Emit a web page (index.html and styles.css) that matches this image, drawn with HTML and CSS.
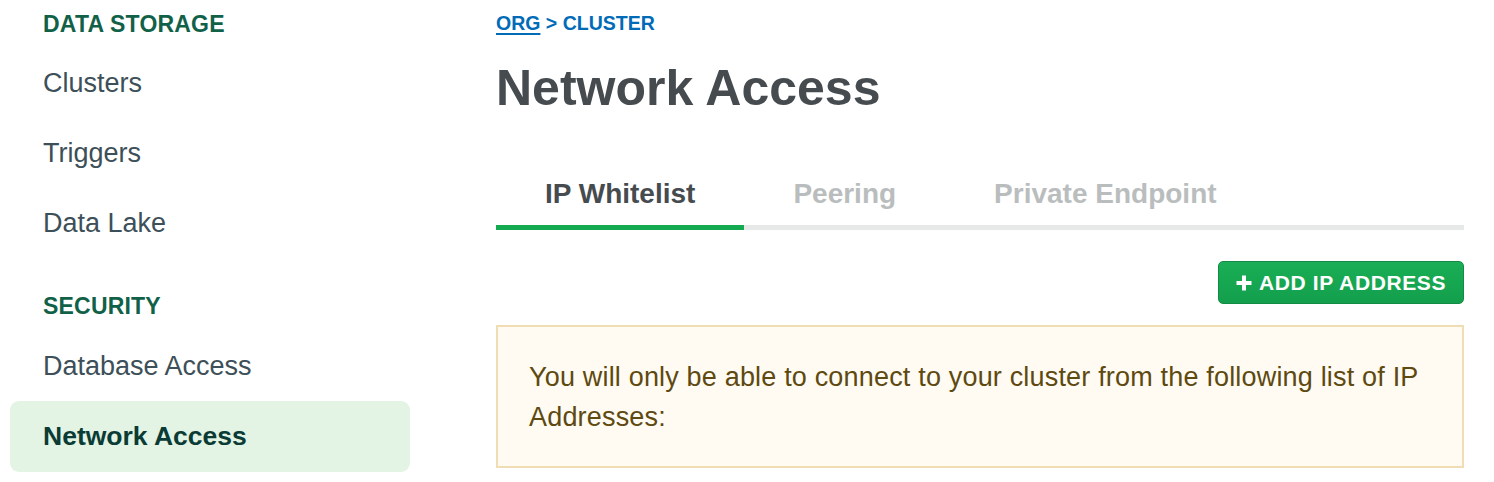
FILE: index.html
```html
<!DOCTYPE html>
<html lang="en">
<head>
<meta charset="utf-8">
<title>Network Access</title>
<link rel="stylesheet" href="styles.css">
</head>
<body>
<div class="page">
  <nav class="sidebar">
    <div class="nav-heading">DATA STORAGE</div>
    <a class="nav-item">Clusters</a>
    <a class="nav-item">Triggers</a>
    <a class="nav-item">Data Lake</a>
    <div class="nav-heading nav-heading-gap">SECURITY</div>
    <a class="nav-item">Database Access</a>
    <a class="nav-item nav-item-active">Network Access</a>
  </nav>
  <main class="main">
    <div class="breadcrumb"><a class="crumb-link">ORG</a> &gt; CLUSTER</div>
    <h1 class="title">Network Access</h1>
    <div class="tabs">
      <div class="tab tab-active">IP Whitelist</div>
      <div class="tab">Peering</div>
      <div class="tab">Private Endpoint</div>
    </div>
    <div class="actions">
      <button class="btn-add">
        <svg class="plus" width="16" height="16" viewBox="0 0 16 16"><path d="M8 0.5V15.5M0.5 8H15.5" stroke="#fff" stroke-width="4" stroke-linecap="butt"/></svg>
        <span>ADD IP ADDRESS</span>
      </button>
    </div>
    <div class="alert">You will only be able to connect to your cluster from the following list of IP Addresses:</div>
  </main>
</div>
</body>
</html>
```
FILE: styles.css
```css
html, body {
  margin: 0;
  padding: 0;
  background: #ffffff;
}
body {
  font-family: "Liberation Sans", Arial, sans-serif;
}
.page {
  display: flex;
  align-items: flex-start;
}
.sidebar {
  width: 400px;
  margin-left: 10px;
  padding-top: 9px;
  display: flex;
  flex-direction: column;
}
.nav-heading {
  font-size: 23px;
  font-weight: 700;
  line-height: 30px;
  color: #116149;
  padding-left: 33px;
  margin-bottom: 9px;
  letter-spacing: 0.2px;
}
.nav-heading-gap {
  margin-top: 33px;
  margin-bottom: 10px;
}
.nav-item {
  display: block;
  height: 70px;
  line-height: 70px;
  padding-left: 33px;
  font-size: 27px;
  color: #3d4f58;
  border-radius: 9px;
}
.nav-item-active {
  height: 71px;
  line-height: 71px;
  background: #e3f3e4;
  color: #0b3b35;
  font-weight: 700;
  font-size: 26.5px;
}
.main {
  margin-left: 86px;
  width: 968px;
  padding-top: 11px;
}
.breadcrumb {
  font-size: 19.5px;
  font-weight: 700;
  line-height: 24px;
  color: #016bb8;
}
.crumb-link {
  text-decoration: underline;
  text-decoration-thickness: 2px;
  text-underline-offset: 3px;
}
.title {
  margin: 23px 0 0;
  font-size: 50px;
  line-height: 60px;
  font-weight: 700;
  color: #464b4f;
}
.tabs {
  margin-top: 59px;
  display: flex;
  border-bottom: 5px solid #e7e8e8;
}
.tab {
  padding: 0 49px 14px;
  font-size: 28px;
  line-height: 34px;
  font-weight: 700;
  color: #babdbe;
}
.tab-active {
  color: #464b4f;
  border-bottom: 5px solid #13aa52;
  margin-bottom: -5px;
}
.actions {
  margin-top: 31px;
  display: flex;
  justify-content: flex-end;
}
.btn-add {
  box-sizing: border-box;
  height: 43px;
  display: flex;
  align-items: center;
  gap: 7px;
  padding: 0 17px 0 17px;
  border: 1px solid #148b45;
  border-radius: 5px;
  background: linear-gradient(#1aae56, #139f4c);
  color: #ffffff;
  font-family: "Liberation Sans", Arial, sans-serif;
  font-size: 21px;
  font-weight: 700;
  letter-spacing: 0.6px;
}
.plus {
  display: block;
}
.alert {
  margin-top: 21px;
  border: 2px solid #f0ddb3;
  background: #fffbf3;
  padding: 30px 32px 29px 31px;
  font-size: 27px;
  line-height: 40px;
  letter-spacing: 0.18px;
  color: #5e4910;
}
```
